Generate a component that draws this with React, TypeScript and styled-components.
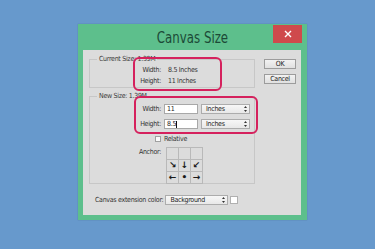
import React from 'react';
import styled, { createGlobalStyle } from 'styled-components';

const GlobalStyle = createGlobalStyle`
  html, body {
    margin: 0;
    padding: 0;
    background: #6799cc;
  }
  body {
    width: 375px;
    height: 249px;
    overflow: hidden;
    font-family: "DejaVu Sans Condensed", "Liberation Sans", sans-serif;
  }
`;

// Fundo azul da tela
const Page = styled.div`
  width: 375px;
  height: 249px;
  padding: 24px 0 0 78px;
  box-sizing: border-box;
`;

// Janela verde do diálogo
const Window = styled.div`
  width: 229px;
  height: 196px;
  box-sizing: border-box;
  background: #5dbf8c;
  padding: 0 6px 5px 5px;
  display: flex;
  flex-direction: column;
  box-shadow: 0 0 1px rgba(0, 0, 0, 0.25);
`;

const TitleBar = styled.div`
  height: 26px;
  display: grid;
  grid-template-columns: 1fr auto 1fr;
  align-items: center;
`;

const Title = styled.div`
  grid-column: 2;
  font-family: "DejaVu Sans Condensed", "Noto Sans", sans-serif;
  font-size: 16px;
  color: #1c4a37;
  line-height: 1;
  margin-top: 2px;
  transform: scaleX(0.82);
`;

const CloseButton = styled.div`
  grid-column: 3;
  justify-self: end;
  align-self: start;
  margin: 1px -1px 0 0;
  width: 29px;
  height: 18px;
  background: #cf4a4c;
  display: flex;
  align-items: center;
  justify-content: center;
`;

// Painel cinza com o conteúdo
const Panel = styled.div`
  position: relative;
  flex: 1;
  background: #dcdcdc;
  padding: 9px 0 0 6px;
  display: grid;
  grid-template-columns: 166px 1fr;
  grid-template-rows: auto 1fr;
  font-size: 7px;
  letter-spacing: -0.3px;
  color: #333;
`;

const Groups = styled.div`
  display: flex;
  flex-direction: column;
  gap: 8px;
`;

const Group = styled.fieldset<{ $h: number }>`
  margin: 0;
  padding: 0;
  height: ${(p) => p.$h}px;
  box-sizing: border-box;
  border: 1px solid #c7c7c7;
  min-width: 0;
  position: relative;
`;

const Legend = styled.span`
  position: absolute;
  top: -5px;
  left: 7px;
  padding: 0 2px;
  background: #dcdcdc;
  line-height: 9px;
  color: #3a3a3a;
`;

const InfoGrid = styled.div`
  display: grid;
  grid-template-columns: 71px auto;
  column-gap: 7px;
  padding-top: 5px;
  line-height: 11px;
`;

const Label = styled.span`
  text-align: right;
  color: #333;
`;

const FormGrid = styled.div`
  display: grid;
  grid-template-columns: 71px 34px 49px;
  column-gap: 3px;
  row-gap: 5px;
  padding-top: 7px;
  align-items: center;
`;

const Input = styled.div`
  height: 10px;
  box-sizing: border-box;
  background: #fff;
  border: 1px solid #a8a8a8;
  padding-left: 2px;
  line-height: 8px;
  color: #222;
  display: flex;
  align-items: center;
`;

const Caret = styled.span`
  width: 1px;
  height: 7px;
  background: #111;
`;

const Select = styled.div<{ $w?: number }>`
  width: ${(p) => (p.$w ? `${p.$w}px` : 'auto')};
  height: 10px;
  box-sizing: border-box;
  background: linear-gradient(#f7f7f7, #e8e8e8);
  border: 1px solid #acacac;
  padding: 0 2px 0 4px;
  line-height: 8px;
  color: #222;
  display: flex;
  align-items: center;
  justify-content: space-between;
`;

const CheckRow = styled.div`
  grid-column: 1 / span 3;
  display: flex;
  align-items: center;
  margin-top: 1px;
`;

const Checkbox = styled.span`
  width: 6px;
  height: 6px;
  box-sizing: border-box;
  background: #fbfbfb;
  border: 1px solid #a0a0a0;
  margin: 0 3px 0 65px;
`;

const AnchorRow = styled.div`
  grid-column: 1 / span 3;
  display: grid;
  grid-template-columns: 71px auto;
  column-gap: 5px;
  margin-top: -1px;
`;

const AnchorLabel = styled.span`
  text-align: right;
  padding-top: 1px;
`;

const AnchorGrid = styled.div`
  display: grid;
  grid-template-columns: repeat(3, 11px);
  grid-template-rows: repeat(3, 11px);
  gap: 1px;
  background: #b9b9b9;
  border: 1px solid #b9b9b9;
  width: max-content;
`;

const AnchorCell = styled.span`
  background: #dcdcdc;
  display: flex;
  align-items: center;
  justify-content: center;
  font-family: "DejaVu Sans", sans-serif;
  font-size: 9px;
  font-weight: bold;
  letter-spacing: 0;
  color: #1a1a1a;
  line-height: 1;
`;

const Buttons = styled.div`
  display: flex;
  flex-direction: column;
  gap: 5px;
  padding-left: 9px;
`;

const Button = styled.div`
  width: 32px;
  height: 10px;
  box-sizing: border-box;
  background: linear-gradient(#f2f2f2, #e0e0e0);
  border: 1px solid #9c9c9c;
  text-align: center;
  line-height: 8px;
  color: #222;
`;

const BottomRow = styled.div`
  grid-column: 1 / span 2;
  display: flex;
  align-items: center;
  gap: 2px;
  padding: 11px 0 0 6px;
  align-self: start;
`;

const Swatch = styled.span`
  width: 8px;
  height: 8px;
  box-sizing: border-box;
  background: #fff;
  border: 1px solid #b0b0b0;
`;

// Anel rosa de destaque por cima do conteúdo
const Ring = styled.div<{ $x: number; $y: number; $w: number; $h: number }>`
  position: absolute;
  left: ${(p) => p.$x}px;
  top: ${(p) => p.$y}px;
  width: ${(p) => p.$w}px;
  height: ${(p) => p.$h}px;
  box-sizing: border-box;
  border: 2px solid #d5215d;
  border-radius: 6px;
  pointer-events: none;
`;

const Spinner = () => (
  <svg width="3" height="6" viewBox="0 0 3 6">
    <path d="M1.5 0 L3 2 L0 2 Z M0 4 L3 4 L1.5 6 Z" fill="#333" />
  </svg>
);

const anchors = ['', '', '', '↘', '↓', '↙', '←', '•', '→'];

export default function App() {
  return (
    <>
      <GlobalStyle />
      <Page>
        <Window>
          <TitleBar>
            <Title>Canvas Size</Title>
            <CloseButton>
              <svg width="8" height="8" viewBox="0 0 8 8">
                <path d="M1 1 L7 7 M7 1 L1 7" stroke="#fff" strokeWidth="1.4" />
              </svg>
            </CloseButton>
          </TitleBar>
          <Panel>
            <Groups>
              <Group $h={29}>
                <Legend>Current Size: 1.39M</Legend>
                <InfoGrid>
                  <Label>Width:</Label>
                  <span>8.5 Inches</span>
                  <Label>Height:</Label>
                  <span>11 Inches</span>
                </InfoGrid>
              </Group>
              <Group $h={88}>
                <Legend>New Size: 1.39M</Legend>
                <FormGrid>
                  <Label>Width:</Label>
                  <Input>11</Input>
                  <Select>
                    Inches
                    <Spinner />
                  </Select>
                  <Label>Height:</Label>
                  <Input>
                    8.5
                    <Caret />
                  </Input>
                  <Select>
                    Inches
                    <Spinner />
                  </Select>
                  <CheckRow>
                    <Checkbox />
                    <span>Relative</span>
                  </CheckRow>
                  <AnchorRow>
                    <AnchorLabel>Anchor:</AnchorLabel>
                    <AnchorGrid>
                      {anchors.map((a, i) => (
                        <AnchorCell key={i}>{a}</AnchorCell>
                      ))}
                    </AnchorGrid>
                  </AnchorRow>
                </FormGrid>
              </Group>
            </Groups>
            <Buttons>
              <Button>OK</Button>
              <Button>Cancel</Button>
            </Buttons>
            <BottomRow>
              <span>Canvas extension color:</span>
              <Select $w={63}>
                Background
                <Spinner />
              </Select>
              <Swatch />
            </BottomRow>
            <Ring $x={50} $y={7} $w={89} $h={34} />
            <Ring $x={51} $y={46} $w={124} $h={38} />
          </Panel>
        </Window>
      </Page>
    </>
  );
}
